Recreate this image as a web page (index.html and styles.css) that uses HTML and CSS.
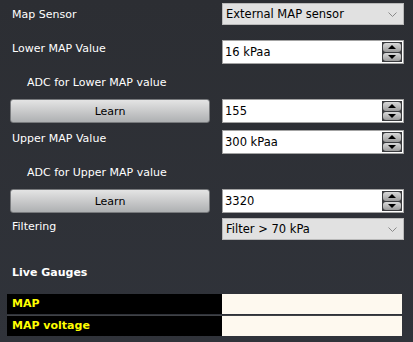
FILE: index.html
```html
<!DOCTYPE html>
<html>
<head>
<meta charset="utf-8">
<link rel="stylesheet" href="styles.css">
</head>
<body>
<div class="page">
  <div class="form">
    <div class="row r1">
      <div class="label l-mid">Map Sensor</div>
      <div class="combo"><span>External MAP sensor</span>
        <svg class="chev" width="9" height="6" viewBox="0 0 9 6"><path d="M0.5 0.5 L4.5 4.5 L8.5 0.5" fill="none" stroke="#8a8a8a" stroke-width="1"/></svg>
      </div>
    </div>
    <div class="row r2">
      <div class="label l-top">Lower MAP Value</div>
      <div class="spin"><span class="val">16 kPaa</span>
        <div class="btns"><div class="sb"><i class="up"></i></div><div class="sb"><i class="dn"></i></div></div>
      </div>
    </div>
    <div class="row r3">
      <div class="label sub">ADC for Lower MAP value</div>
    </div>
    <div class="row r4">
      <div class="learn">Learn</div>
      <div class="spin"><span class="val">155</span>
        <div class="btns"><div class="sb"><i class="up"></i></div><div class="sb"><i class="dn"></i></div></div>
      </div>
    </div>
    <div class="row r5">
      <div class="label l-top">Upper MAP Value</div>
      <div class="spin"><span class="val">300 kPaa</span>
        <div class="btns"><div class="sb"><i class="up"></i></div><div class="sb"><i class="dn"></i></div></div>
      </div>
    </div>
    <div class="row r6">
      <div class="label sub">ADC for Upper MAP value</div>
    </div>
    <div class="row r7">
      <div class="learn">Learn</div>
      <div class="spin"><span class="val">3320</span>
        <div class="btns"><div class="sb"><i class="up"></i></div><div class="sb"><i class="dn"></i></div></div>
      </div>
    </div>
    <div class="row r8">
      <div class="label l-top">Filtering</div>
      <div class="combo"><span>Filter &gt; 70 kPa</span>
        <svg class="chev" width="9" height="6" viewBox="0 0 9 6"><path d="M0.5 0.5 L4.5 4.5 L8.5 0.5" fill="none" stroke="#8a8a8a" stroke-width="1"/></svg>
      </div>
    </div>
    <div class="heading">Live Gauges</div>
  </div>
  <div class="gauges">
    <div class="grow"><div class="gname">MAP</div><div class="gval"></div></div>
    <div class="grow"><div class="gname">MAP voltage</div><div class="gval"></div></div>
  </div>
</div>
</body>
</html>
```
FILE: styles.css
```css
html, body {
  margin: 0;
  padding: 0;
  background: #2e3035;
}
body {
  width: 413px;
  height: 342px;
  overflow: hidden;
  font-family: "DejaVu Sans", Verdana, sans-serif;
  font-size: 11px;
  color: #ffffff;
}
.page {
  width: 413px;
  height: 342px;
  background: linear-gradient(#2c2e33, #30333a);
}
.form {
  padding: 3px 9px 0 10px;
  display: flex;
  flex-direction: column;
}
.row {
  display: grid;
  grid-template-columns: 200px 182px;
  column-gap: 12px;
}
.r1 { height: 22px; }
.r2 { height: 24px; margin-top: 15px; }
.r3 { height: 16px; margin-top: 10px; }
.r4 { height: 24px; margin-top: 9px; }
.r5 { height: 24px; margin-top: 7px; }
.r6 { height: 16px; margin-top: 10px; }
.r7 { height: 24px; margin-top: 9px; }
.r8 { height: 22px; margin-top: 5px; }
.label {
  padding-left: 2px;
  line-height: 13px;
  white-space: nowrap;
}
.l-mid { align-self: center; }
.l-top { padding-top: 2px; }
.sub {
  padding-left: 17px;
  align-self: center;
}
.combo {
  box-sizing: border-box;
  background: #e1e1e1;
  border: 1px solid #b9b9b9;
  color: #000;
  display: flex;
  align-items: center;
  justify-content: space-between;
  padding: 0 6px 0 3px;
  font-size: 11.5px;
}
.chev { display: block; margin-top: 1px; }
.spin {
  box-sizing: border-box;
  background: #ffffff;
  border: 1px solid #a3a3a3;
  color: #000;
  display: flex;
  align-items: center;
  justify-content: space-between;
  padding-left: 2px;
  font-size: 11.5px;
}
.btns {
  align-self: stretch;
  width: 20px;
  background: #3a3b3e;
  display: flex;
  flex-direction: column;
  justify-content: center;
  gap: 1px;
  padding: 1px 1px;
  margin: 1px 1px 1px 0;
  box-sizing: border-box;
}
.sb {
  flex: 1;
  border-radius: 3px;
  background: linear-gradient(#dadada, #9a9a9a);
  display: flex;
  align-items: center;
  justify-content: center;
}
.up, .dn {
  display: block;
  width: 0;
  height: 0;
  border-left: 4px solid transparent;
  border-right: 4px solid transparent;
}
.up { border-bottom: 4px solid #000; }
.dn { border-top: 4px solid #000; }
.learn {
  box-sizing: border-box;
  border-radius: 3px;
  border: 1px solid #77797c;
  background: linear-gradient(#e4e4e4, #aeb0b2);
  color: #000;
  display: flex;
  align-items: center;
  justify-content: center;
  font-size: 11px;
}
.heading {
  margin-top: 26px;
  height: 14px;
  line-height: 14px;
  padding-left: 2px;
  font-weight: bold;
}
.gauges {
  margin: 14px 0 0 7px;
  width: 395px;
  display: flex;
  flex-direction: column;
  gap: 1px;
}
.grow {
  display: grid;
  grid-template-columns: 215px 180px;
  height: 20px;
}
.grow + .grow { border-top: 1px solid #404246; }
.gname {
  background: #000;
  color: #ffff00;
  font-weight: bold;
  padding-left: 5px;
  line-height: 20px;
}
.gval { background: #fef9ef; }
```
